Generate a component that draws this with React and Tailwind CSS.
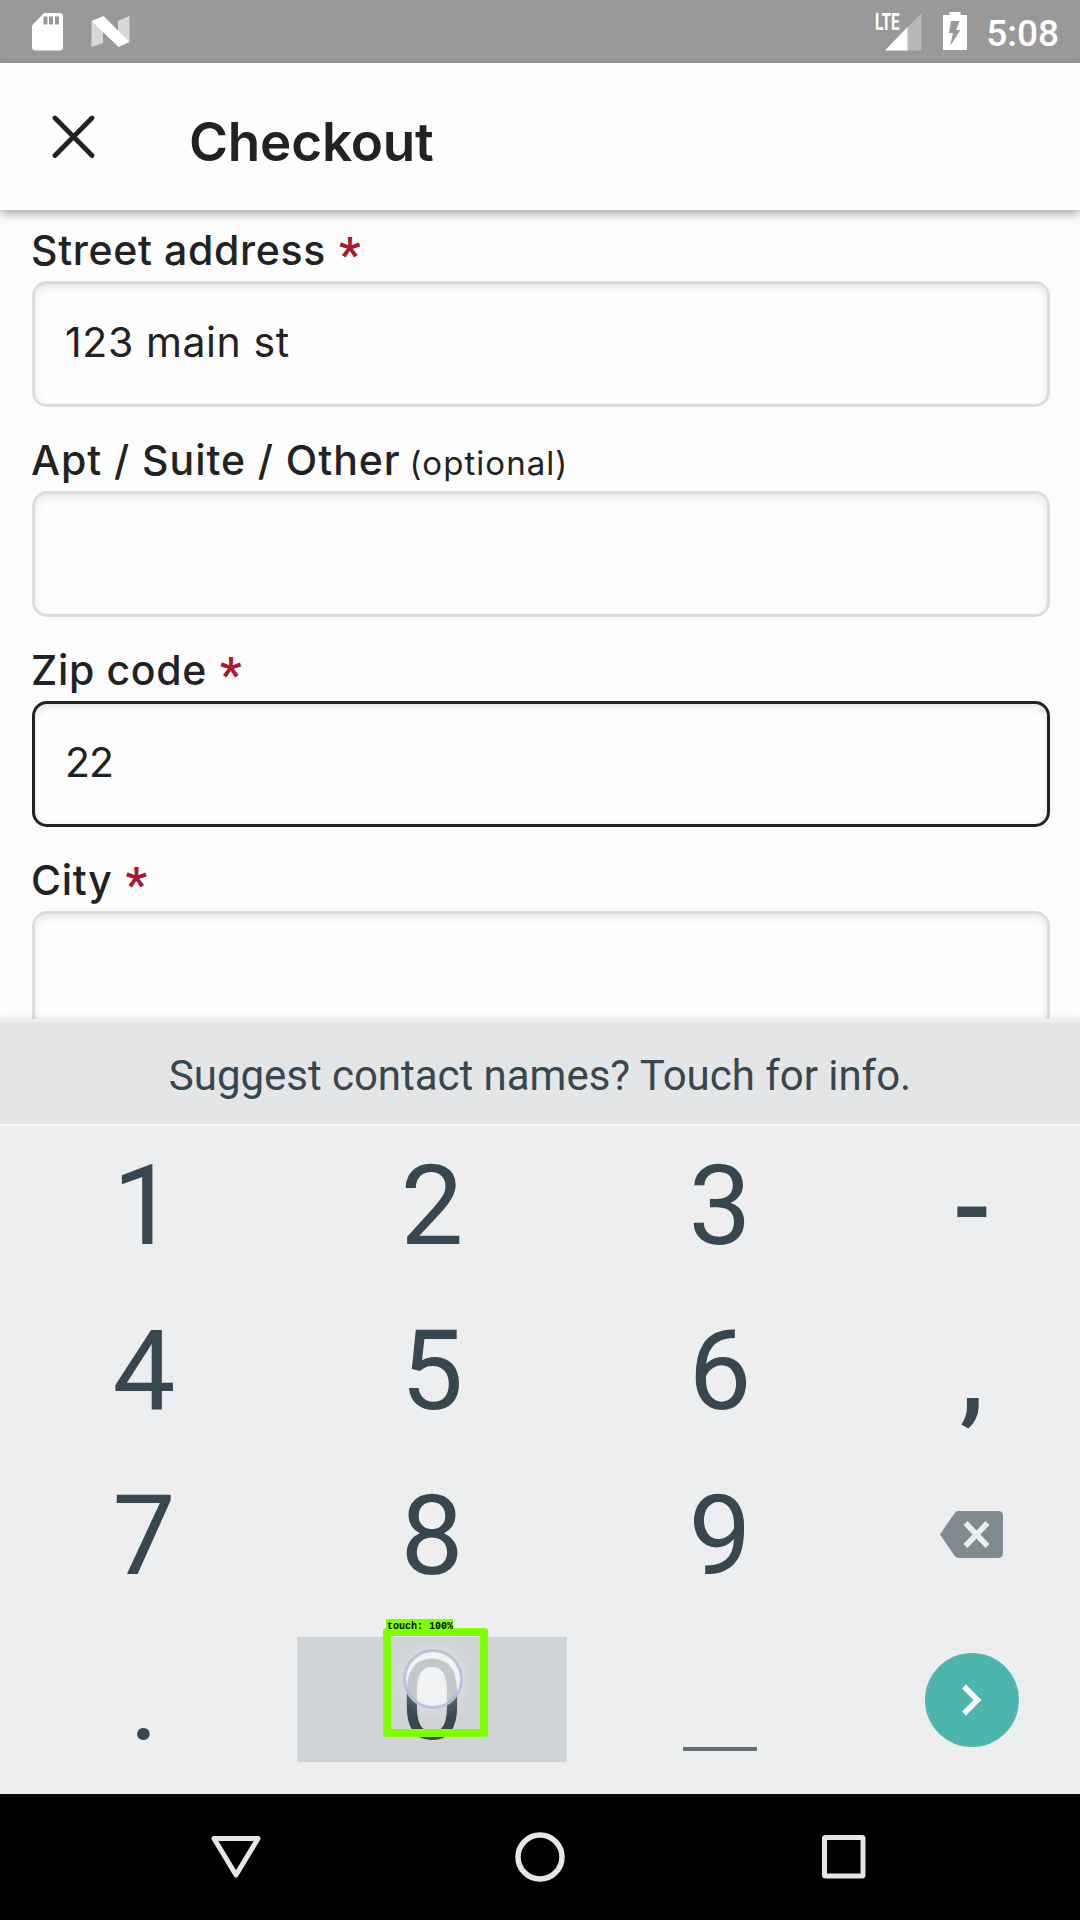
const SANS = "font-['Inter',sans-serif]";

function StatusBar() {
  return (
    <div className="flex h-[63px] shrink-0 items-start bg-[#999999] text-white">
      <svg className="ml-8 mt-3 h-[39px] w-[31px]" viewBox="0 0 31 39">
        <path d="M12 1H27.5Q31 1 31 4.500V35Q31 38.500 27.500 38.500H3.500Q0 38.500 0 35V13.500Z" fill="#fff" />
        <path d="M11.500 4.500h4v8h-4zM17 4.500h4v8h-4zM23 4.500h4v8h-4z" fill="#999" />
      </svg>
      <svg className="ml-7 mt-4 h-8 w-[39px]" viewBox="0 0 39 32">
        <path d="M.5 5 12 14V27L.5 31ZM27 5 38.500 0V26L27 16Z" fill="#d8d8d8" />
        <path d="M.5 5 12.500 0 38.500 26 27.500 31Z" fill="#fff" />
      </svg>
      <div className="ml-auto mr-[21px] flex h-full">
        <div className="relative h-full w-[46px]">
          <svg className="mt-3 h-[39px] w-[46px]" viewBox="0 0 46 39">
            <path d="M9 38.500 45.500 1V38.500Z" fill="#b8b8b8" />
            <path d="M9 38.500 31.500 15V38.500Z" fill="#fff" />
          </svg>
          <span className="absolute -left-px top-[10px] origin-left scale-x-[0.64] font-['Roboto',sans-serif] text-[24px] font-bold leading-6">LTE</span>
        </div>
        <svg className="ml-[21px] mt-3 h-[38px] w-6" viewBox="0 0 24 38">
          <path d="M6.500 0H17.500V3H24V38H0V3H6.500Z" fill="#fff" />
          <path d="M8 9H16.500L13 18H17.500L7 34 10 21H6Z" fill="#999" />
        </svg>
        <span className="ml-[19px] mt-[10px] font-['Roboto',sans-serif] text-[37px] font-medium leading-[48px]">5:08</span>
      </div>
    </div>
  );
}

function Header() {
  return (
    <header className="relative z-10 flex h-[147px] shrink-0 bg-[#fefefe] shadow-[0_4px_9px_rgba(0,0,0,0.33)]">
      <svg className="ml-[52px] mt-[52px] size-[44px]" viewBox="0 0 44 44">
        <path d="M3 3 40 40.500M40 3 3 40.500" stroke="#222" strokeWidth="4.800" strokeLinecap="round" />
      </svg>
      <h1 className="ml-[93px] mt-[47px] text-[53px] font-semibold leading-[64px] tracking-[-0.2px]">Checkout</h1>
    </header>
  );
}

function Field({ label, spacing, required, optional, value, valueSpacing = "", focused }) {
  return (
    <div className="h-[210px] shrink-0">
      <div className={`-ml-px flex h-[71px] items-baseline whitespace-pre leading-[50px] ${required ? "pt-[14px]" : "pt-[15px]"}`}>
        <span className={`text-[41px] font-medium ${spacing}`}>{label}</span>
        {required && (
          <span className="relative top-[6px] ml-[13px] h-[50px] font-['Roboto',sans-serif] text-[48px] font-semibold text-[#a61a2e]">*</span>
        )}
        {optional && <span className="ml-[9px] text-[33px] tracking-[1.05px]">(optional)</span>}
      </div>
      <div
        className={`flex h-[126px] items-center rounded-[15px] border-[3px] bg-[#fefefe] px-[30px] pb-[3px] text-[41px] ${valueSpacing} shadow-[inset_0_3px_8px_rgba(0,0,0,0.1)] ${focused ? "border-[#222]" : "border-[#dcdcdc]"}`}
      >
        {value}
      </div>
    </div>
  );
}

function Key({ children }) {
  return <div className="flex items-center justify-center pt-[3px] text-[112px] leading-[162px]">{children}</div>;
}

function PunctuationKey({ children }) {
  return <div className="flex items-center justify-center pt-[7px] text-[112px] font-medium leading-[158px]">{children}</div>;
}

function ZeroKey() {
  return (
    <div className="relative flex items-center justify-center">
      <div className="flex h-[125px] w-[270px] items-center justify-center bg-[#d1d4d6] pt-[3px] text-[112px] leading-none">0</div>
      <div className="absolute left-[115px] top-[32px] size-[60px] rounded-full border-[3px] border-[#b3b3d9]/80 bg-white/70 shadow-[0_0_16px_rgba(255,255,255,0.35)]" />
      <div className="absolute left-[95px] top-[11px] h-[109px] w-[105px] rounded-[3px] border-8 border-[#80ff00]" />
      <div className="absolute left-[98px] top-[2px] h-[13px] w-[67px] whitespace-pre bg-[#80ff00] pl-px font-['Liberation_Mono',monospace] text-[10px] font-bold leading-[15px] text-black">touch: 100%</div>
    </div>
  );
}

function Keyboard() {
  return (
    <section className="relative z-10 flex h-[775px] shrink-0 flex-col border-t-[3px] border-[#efefef] bg-[#eceeef] font-['Roboto',sans-serif] text-[#37474f] shadow-[0_-2px_6px_rgba(0,0,0,0.07)]">
      <div className="flex h-[104px] shrink-0 items-center justify-center border-b-2 border-[#f5f6f7] bg-[#e3e5e6] pt-1 text-[42px] tracking-[-0.03px]">
        Suggest contact names? Touch for info.
      </div>
      <div className="-mt-1 grid grid-cols-[288px_288px_288px_216px] grid-rows-[165px_165px_165px_165px]">
        <Key>1</Key><Key>2</Key><Key>3</Key><PunctuationKey>-</PunctuationKey>
        <Key>4</Key><Key>5</Key><Key>6</Key><PunctuationKey>,</PunctuationKey>
        <Key>7</Key><Key>8</Key><Key>9</Key>
        <div className="flex items-center justify-center pr-[2px]">
          <svg className="h-[47px] w-[63px]" viewBox="0 0 63 47">
            <path d="M18 0H58Q63 0 63 5V42Q63 47 58 47H18Q16 47 14 44L0 23.500 14 3Q16 0 18 0Z" fill="#7f8b90" />
            <path d="M25.500 12 47.500 35M47.500 12 25.500 35" stroke="#eceeef" strokeWidth="5.500" />
          </svg>
        </div>
        <Key>.</Key>
        <ZeroKey />
        <div className="flex items-end justify-center pb-[31px]">
          <div className="h-1 w-[74px] bg-[#5f7072]" />
        </div>
        <div className="flex items-center justify-center pr-px">
          <div className="flex size-[94px] items-center justify-center rounded-full bg-[#4db6ac]">
            <svg className="h-8 w-5" viewBox="0 0 20 32">
              <path d="M2 2.500 15.500 16 2 29.500" fill="none" stroke="#fff" strokeWidth="5.500" />
            </svg>
          </div>
        </div>
      </div>
    </section>
  );
}

function NavBar() {
  return (
    <nav className="flex h-[126px] shrink-0 items-center justify-center gap-[250px] bg-black">
      <svg className="size-[54px]" viewBox="0 0 54 54">
        <path d="M5 8.500H49L27 45Z" fill="none" stroke="#e6e6e6" strokeWidth="5" strokeLinejoin="round" />
      </svg>
      <svg className="size-[54px]" viewBox="0 0 54 54">
        <circle cx="27" cy="27" r="22" fill="none" stroke="#e6e6e6" strokeWidth="5.500" />
      </svg>
      <svg className="size-[54px]" viewBox="0 0 54 54">
        <rect x="7.500" y="7.500" width="38.500" height="38.500" rx="1" fill="none" stroke="#e6e6e6" strokeWidth="5" />
      </svg>
    </nav>
  );
}

export default function App() {
  return (
    <div className={`flex h-[1920px] w-[1080px] flex-col overflow-hidden bg-[#fdfdfd] text-[#222] ${SANS}`}>
      <StatusBar />
      <Header />
      <main className="flex h-[809px] shrink-0 flex-col overflow-hidden pl-8 pr-[30px]">
        <Field label="Street address" spacing="tracking-[0.65px]" required value="123 main st" valueSpacing="tracking-[0.6px]" />
        <Field label="Apt / Suite / Other" spacing="tracking-[0.95px]" optional />
        <Field label="Zip code" spacing="tracking-[0.65px]" required value="22" valueSpacing="tracking-[-1px]" focused />
        <Field label="City" spacing="tracking-[0.7px]" required />
      </main>
      <Keyboard />
      <NavBar />
    </div>
  );
}
